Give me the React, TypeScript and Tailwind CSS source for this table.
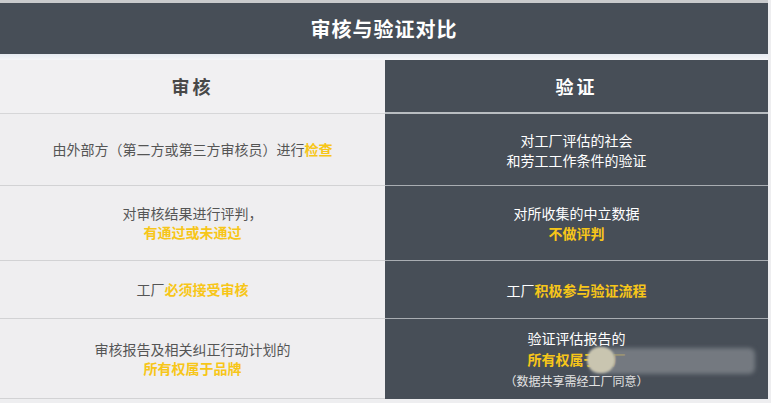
import React from "react";

const Y = ({ children }: { children: React.ReactNode }) => (
  <span className="font-bold text-[#f7c619]">{children}</span>
);

const rows: { h: string; left: React.ReactNode; right: React.ReactNode }[] = [
  {
    h: "h-[72px]",
    left: (
      <p>
        由外部方（第二方或第三方审核员）进行<Y>检查</Y>
      </p>
    ),
    right: (
      <p>
        对工厂评估的社会
        <br />
        和劳工工作条件的验证
      </p>
    ),
  },
  {
    h: "h-[75px]",
    left: (
      <p>
        对审核结果进行评判，
        <br />
        <Y>有通过或未通过</Y>
      </p>
    ),
    right: (
      <p>
        对所收集的中立数据
        <br />
        <Y>不做评判</Y>
      </p>
    ),
  },
  {
    h: "h-[58px]",
    left: (
      <p>
        工厂<Y>必须接受审核</Y>
      </p>
    ),
    right: (
      <p>
        工厂<Y>积极参与验证流程</Y>
      </p>
    ),
  },
];

export default function App() {
  return (
    <div
      className="relative h-[403px] w-[771px] overflow-hidden bg-[#eeeef0] pr-[3px]"
      style={{ fontFamily: '"Noto Sans CJK SC", "Noto Sans", sans-serif' }}
    >
      <div className="h-[3px] bg-[#c9cacc]" />
      <div className="flex h-[51px] items-center justify-center bg-[#474e57] text-[20px] font-bold tracking-[1px] text-white">
        审核与验证对比
      </div>
      <div className="h-[6px] bg-gradient-to-b from-[#e6eaf0] to-[#f6f6f8]" />

      <div className="grid grid-cols-[385px_1fr]">
        <div className="flex h-[54px] items-center justify-center border-b border-[#d6d6d8] bg-[#f1f0f2] text-[18px] font-bold tracking-[3px] text-[#484848]">
          审核
        </div>
        <div className="flex h-[54px] items-center justify-center border-b-2 border-[#b9bdc1] bg-[#474e57] text-[18px] font-bold tracking-[3px] text-white">
          验证
        </div>

        {rows.map((r, i) => (
          <React.Fragment key={i}>
            <div
              className={`flex ${r.h} items-center justify-center border-b border-[#d2d2d4] bg-[#efeef0] text-center text-[14px] leading-[19px] text-[#555]`}
            >
              {r.left}
            </div>
            <div
              className={`flex ${r.h} items-center justify-center border-b border-[#a9adb2] bg-[#474e57] text-center text-[14px] leading-[20px] text-white`}
            >
              {r.right}
            </div>
          </React.Fragment>
        ))}

        <div className="flex h-[80px] items-center justify-center border-b border-[#d2d2d4] bg-[#efeef0] text-center text-[14px] leading-[19px] text-[#555]">
          <p>
            审核报告及相关纠正行动计划的
            <br />
            <Y>所有权属于品牌</Y>
          </p>
        </div>
        <div className="relative flex h-[80px] flex-col items-center justify-center bg-[#474e57] text-center text-[14px] leading-[21px] text-white">
          <p>验证评估报告的</p>
          <p>
            <Y>所有权属于工厂</Y>
          </p>
          <p className="text-[12px] text-[#e4e4e4]">（数据共享需经工厂同意）</p>
          <div className="absolute left-[205px] top-[29px] h-[26px] w-[165px] rounded-[6px] bg-[#80858b]/80 blur-[2px]" />
          <div className="absolute left-[202px] top-[28px] h-[26px] w-[28px] rounded-full bg-[#c9c5b0] blur-[1px]" />
        </div>
      </div>
    </div>
  );
}
